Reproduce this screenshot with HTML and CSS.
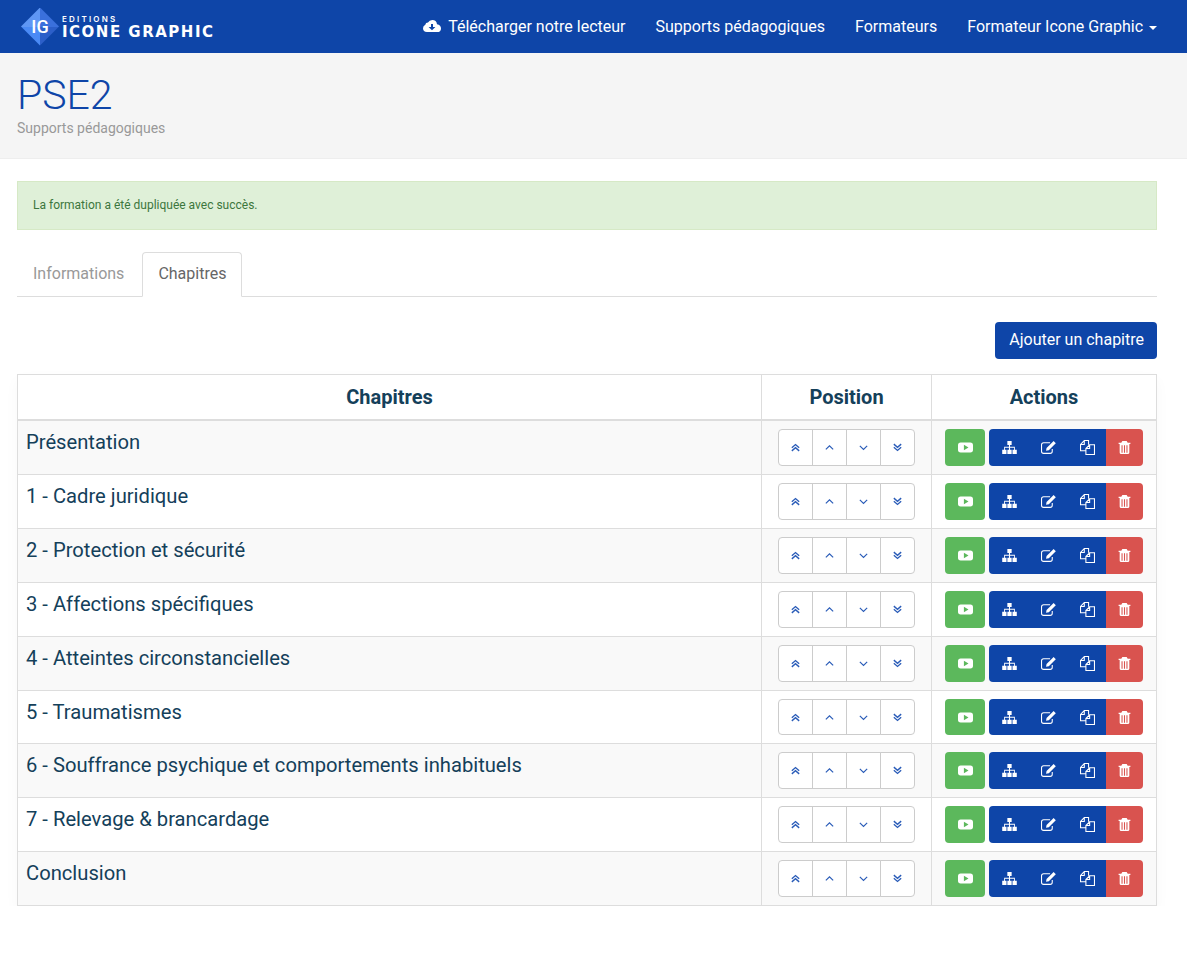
FILE: index.html
```html
<!DOCTYPE html>
<html lang="fr">
<head>
    <meta charset="UTF-8">
    <meta name="viewport" content="width=device-width, initial-scale=1.0">
    <title>PSE2 - Supports pédagogiques</title>
    <link rel="stylesheet" href="styles.css">
</head>
<body>

    <!-- Icons -->
    <svg class="icon-defs" aria-hidden="true">
        <symbol id="i-first" viewBox="0 0 12 12"><path d="M2 6.2 L6 2.8 L10 6.2 M2 9.7 L6 6.3 L10 9.7" fill="none" stroke="currentColor" stroke-width="1.5"/></symbol>
        <symbol id="i-up" viewBox="0 0 12 12"><path d="M2 8 L6 4.2 L10 8" fill="none" stroke="currentColor" stroke-width="1.3"/></symbol>
        <symbol id="i-down" viewBox="0 0 12 12"><path d="M2 4.2 L6 8 L10 4.2" fill="none" stroke="currentColor" stroke-width="1.3"/></symbol>
        <symbol id="i-last" viewBox="0 0 12 12"><path d="M2 2.3 L6 5.7 L10 2.3 M2 5.8 L6 9.2 L10 5.8" fill="none" stroke="currentColor" stroke-width="1.5"/></symbol>
        <symbol id="i-play" viewBox="0 0 14 14"><path fill-rule="evenodd" fill="currentColor" d="M2.5 2.3 H11.5 Q14 2.3 14 4.8 V9.2 Q14 11.7 11.5 11.7 H2.5 Q0 11.7 0 9.2 V4.8 Q0 2.3 2.5 2.3 Z M5.5 4.5 V9.5 L9.8 7 Z"/></symbol>
        <symbol id="i-tree" viewBox="0 0 14 14"><path fill="currentColor" d="M5 1 H9 V4.7 H7.5 V6.3 H12 V9 H13.8 V13 H9.8 V9 H11.2 V7.2 H7.5 V9 H9 V13 H5 V9 H6.5 V7.2 H2.8 V9 H4.2 V13 H0.2 V9 H2 V6.3 H6.5 V4.7 H5 Z"/></symbol>
        <symbol id="i-edit" viewBox="0 0 14 14"><path fill="none" stroke="currentColor" stroke-width="1" d="M10.5 8.5 V10.5 Q10.5 12.5 8.5 12.5 H2.5 Q0.5 12.5 0.5 10.5 V4.5 Q0.5 2.5 2.5 2.5 H8.5"/><path fill="currentColor" d="M11.8 1 L13.8 3 L7.3 9.5 L4.7 10 L5.2 7.5 Z"/></symbol>
        <symbol id="i-copy" viewBox="0 0 14 14"><path fill="none" stroke="currentColor" stroke-width="1" d="M5.5 10 H0.5 V4.2 L4 0.5 H8 V4.5 M4 0.5 V4.2 H0.5 M5.5 13.5 H13.5 V4.5 H9 L5.5 8 Z M9 4.5 V8 H5.5"/></symbol>
        <symbol id="i-trash" viewBox="0 0 12 14"><path fill="currentColor" fill-rule="evenodd" d="M4 1 H8 L9 2.5 H11.5 V3.8 H10.5 V12 Q10.5 13 9.5 13 H2.5 Q1.5 13 1.5 12 V3.8 H0.5 V2.5 H3 Z M3.2 5 V11.8 H4.2 V5 Z M5.5 5 V11.8 H6.5 V5 Z M7.8 5 V11.8 H8.8 V5 Z"/></symbol>
        <symbol id="i-cloud" viewBox="0 0 18 14"><path fill="currentColor" fill-rule="evenodd" d="M4 13 Q0 13 0 9.3 Q0 6.8 2.3 5.8 Q2.6 3.6 5 3.6 Q6.3 1 9.3 1 Q13.4 1 14 5.2 Q18 6 18 9.4 Q18 13 14 13 Z M8 5 V8 H5.6 L9 11.3 L12.4 8 H10 V5 Z"/></symbol>
    </svg>

    <!-- Navbar -->
    <nav class="navbar">
        <a class="brand" href="#">
            <span class="brand-mark"><span class="brand-ig">IG</span></span>
            <span class="brand-text">
                <span class="brand-small">EDITIONS</span>
                <span class="brand-big">ICONE GRAPHIC</span>
            </span>
        </a>
        <ul class="nav-links">
            <li><a href="#"><svg class="cloud"><use href="#i-cloud"/></svg>Télécharger notre lecteur</a></li>
            <li><a href="#">Supports pédagogiques</a></li>
            <li><a href="#">Formateurs</a></li>
            <li><a href="#">Formateur Icone Graphic <span class="caret"></span></a></li>
        </ul>
    </nav>

    <!-- Page title -->
    <header class="page-header">
        <h1>PSE2</h1>
        <p>Supports pédagogiques</p>
    </header>

    <main class="content">
        <div class="alert">La formation a été dupliquée avec succès.</div>

        <ul class="tabs">
            <li><a href="#">Informations</a></li>
            <li class="active"><a href="#">Chapitres</a></li>
        </ul>

        <div class="toolbar">
            <a class="add-btn" href="#">Ajouter un chapitre</a>
        </div>

        <table class="chapters">
            <thead>
                <tr><th>Chapitres</th><th class="col-pos">Position</th><th class="col-act">Actions</th></tr>
            </thead>
            <tbody id="rows"></tbody>
        </table>
    </main>

    <script src="script.js"></script>
</body>
</html>
```

FILE: styles.css
```css
/* General Styles */
body {
    margin: 0;
    font-family: Roboto, "Liberation Sans", sans-serif;
    font-size: 14px;
    color: #333;
    background-color: #fff;
}

a {
    text-decoration: none;
}

.icon-defs {
    display: none;
}

/* Navbar */
.navbar {
    height: 53px;
    background-color: #0e45a8;
    display: flex;
    justify-content: space-between;
    align-items: center;
    padding: 0 15px 0 21px;
}

.brand {
    display: flex;
    align-items: center;
    color: white;
}

.brand-mark {
    width: 38px;
    height: 38px;
    display: flex;
    align-items: center;
    justify-content: center;
    background: conic-gradient(#3a70dc 0 90deg, #2c5fc9 90deg 180deg, #4a8af5 180deg 270deg, #5f97f5 270deg 360deg);
    clip-path: polygon(50% 0, 100% 50%, 50% 100%, 0 50%);
}

.brand-ig {
    font-size: 18px;
    font-weight: 500;
    color: white;
}

.brand-text {
    display: flex;
    flex-direction: column;
    margin-left: 3px;
    margin-top: 2px;
}

.brand-small {
    font-family: Inter, sans-serif;
    font-size: 8px;
    font-weight: 600;
    letter-spacing: 2.2px;
    line-height: 9px;
}

.brand-big {
    font-family: "DejaVu Sans", sans-serif;
    font-size: 15px;
    font-weight: 700;
    letter-spacing: 1.5px;
    line-height: 17px;
}

.nav-links {
    display: flex;
    list-style: none;
    margin: 0;
    padding: 0;
}

.nav-links a {
    display: block;
    padding: 0 15px;
    color: white;
    font-size: 16px;
    line-height: 53px;
}

.cloud {
    width: 18px;
    height: 14px;
    margin-right: 7px;
    vertical-align: -1px;
}

.caret {
    display: inline-block;
    width: 0;
    height: 0;
    margin-left: 2px;
    vertical-align: middle;
    border-top: 4px solid white;
    border-left: 4px solid transparent;
    border-right: 4px solid transparent;
}

/* Page header */
.page-header {
    height: 106px;
    box-sizing: border-box;
    padding: 19px 17px 0;
    background-color: #f5f5f5;
    border-bottom: 1px solid #eee;
}

.page-header h1 {
    margin: 0;
    font-size: 41px;
    font-weight: 300;
    line-height: 46px;
    color: #0e45a8;
}

.page-header p {
    margin: 1px 0 0;
    font-size: 14px;
    line-height: 18px;
    color: #999;
}

/* Main content */
.content {
    padding: 22px 30px 0 17px;
}

.alert {
    height: 49px;
    box-sizing: border-box;
    padding: 0 15px;
    line-height: 47px;
    font-size: 12px;
    color: #3c763d;
    background-color: #dff0d8;
    border: 1px solid #d6e9c6;
}

/* Tabs */
.tabs {
    display: flex;
    list-style: none;
    margin: 22px 0 0;
    padding: 0;
    height: 44px;
    border-bottom: 1px solid #ddd;
}

.tabs a {
    display: block;
    height: 42px;
    padding: 0 15px;
    margin-right: 2px;
    line-height: 42px;
    font-size: 16px;
    color: #999;
    border: 1px solid transparent;
}

.tabs .active a {
    height: 43px;
    color: #666;
    background-color: white;
    border: 1px solid #ddd;
    border-bottom-color: white;
    border-radius: 4px 4px 0 0;
}

/* Toolbar */
.toolbar {
    display: flex;
    justify-content: flex-end;
    margin-top: 25px;
}

.add-btn {
    height: 37px;
    padding: 0 13px 0 14px;
    line-height: 36px;
    font-size: 16px;
    color: white;
    background-color: #0e45a8;
    border-radius: 4px;
}

/* Table */
.chapters {
    width: 100%;
    margin-top: 15px;
    border-collapse: collapse;
    table-layout: fixed;
    box-shadow: 0 6px 14px rgba(0, 0, 0, 0.03);
}

.chapters th,
.chapters td {
    border: 1px solid #ddd;
    padding: 8px;
}

.chapters th {
    height: 28.4px;
    border-bottom-width: 2px;
    font-size: 20px;
    font-weight: 700;
    line-height: 28px;
    color: #14405a;
}

.col-pos {
    width: 153px;
}

.col-act {
    width: 208px;
}

.chapters td {
    height: 36.85px;
    vertical-align: top;
    box-sizing: content-box;
    font-size: 20.2px;
    line-height: 27px;
    color: #14405a;
}

.chapters tbody tr:nth-child(odd) td {
    background-color: #f9f9f9;
}

.chapters td.cell-center {
    text-align: center;
}

.chapter-name {
    display: block;
}

/* Button groups */
.group {
    display: inline-flex;
    height: 36.85px;
    vertical-align: top;
}

.pos-btn {
    width: 35px;
    box-sizing: border-box;
    display: flex;
    align-items: center;
    justify-content: center;
    color: #2a5cb8;
    background-color: white;
    border: 1px solid #ccc;
    margin-left: -1px;
}

.pos-btn:first-child {
    margin-left: 0;
    border-radius: 4px 0 0 4px;
}

.pos-btn:last-child {
    border-radius: 0 4px 4px 0;
}

.pos-btn svg {
    width: 11px;
    height: 11px;
}

.actions {
    display: flex;
    justify-content: center;
}

.act-btn {
    display: flex;
    align-items: center;
    justify-content: center;
    box-sizing: border-box;
    width: 39px;
    height: 36.85px;
    padding-left: 1px;
    color: white;
    background-color: #0e45a8;
}

.act-btn svg {
    width: 15px;
    height: 15px;
}

.act-btn.play {
    width: 40px;
    margin-right: 4px;
    padding-left: 0;
    background-color: #5cb85c;
    border-radius: 4px;
}

.act-btn.tree {
    border-radius: 4px 0 0 4px;
}

.act-btn.trash {
    width: 37px;
    padding-left: 0;
    background-color: #d9534f;
    border-radius: 0 4px 4px 0;
}

.act-btn.trash svg {
    width: 13px;
}
```

FILE: script.js
```js
// Chapter rows
var chapters = [
    "Présentation",
    "1 - Cadre juridique",
    "2 - Protection et sécurité",
    "3 - Affections spécifiques",
    "4 - Atteintes circonstancielles",
    "5 - Traumatismes",
    "6 - Souffrance psychique et comportements inhabituels",
    "7 - Relevage & brancardage",
    "Conclusion"
];

function icon(name) {
    return '<svg><use href="#i-' + name + '"/></svg>';
}

function rowHtml(title) {
    var pos = ["first", "up", "down", "last"].map(function (n) {
        return '<a class="pos-btn" href="#">' + icon(n) + '</a>';
    }).join("");
    var acts = ["play", "tree", "edit", "copy", "trash"].map(function (n) {
        return '<a class="act-btn ' + n + '" href="#">' + icon(n) + '</a>';
    }).join("");
    return '<tr>' +
        '<td><span class="chapter-name">' + title.replace("&", "&amp;") + '</span></td>' +
        '<td class="cell-center"><div class="group">' + pos + '</div></td>' +
        '<td><div class="actions">' + acts + '</div></td>' +
        '</tr>';
}

document.getElementById("rows").innerHTML = chapters.map(rowHtml).join("");
```
